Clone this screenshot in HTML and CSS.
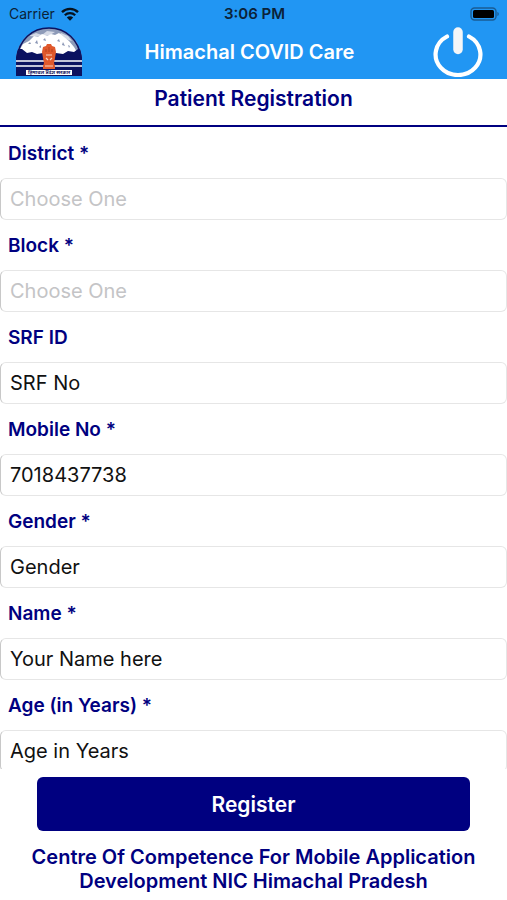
FILE: index.html
```html
<!DOCTYPE html>
<html lang="en">
<head>
    <meta charset="UTF-8">
    <meta name="viewport" content="width=device-width, initial-scale=1.0">
    <title>Himachal COVID Care</title>
    <link rel="stylesheet" href="styles.css">
</head>
<body>
    <header>
        <div class="status-bar">
            <div class="carrier">
                <span>Carrier</span>
                <svg class="wifi" viewBox="0 0 18 14" aria-hidden="true">
                    <path d="M1 5.2a11.4 11.4 0 0 1 16 0" fill="none" stroke="currentColor" stroke-width="2.4"/>
                    <path d="M3.8 8.2a7.4 7.4 0 0 1 10.4 0" fill="none" stroke="currentColor" stroke-width="2.2"/>
                    <path d="M9 13.8L5.8 10.5a4.6 4.6 0 0 1 6.4 0z" fill="currentColor"/>
                </svg>
            </div>
            <div class="time">3:06 PM</div>
            <svg class="battery" viewBox="0 0 30 14" aria-hidden="true">
                <rect x="1" y="1" width="25" height="12" rx="3.5" fill="none" stroke="#1a5c94" stroke-width="1.4"/>
                <rect x="3" y="3" width="21" height="8" rx="1.5" fill="#000"/>
                <path d="M27.4 5v4c1.8-.5 1.8-3.5 0-4z" fill="#1a5c94"/>
            </svg>
        </div>
        <div class="title-bar">
            <svg class="emblem" viewBox="0 0 66 50" role="img" aria-label="Government of Himachal Pradesh">
                <defs>
                    <clipPath id="dome">
                        <path d="M0 49V31C2 13 15 1 33 1s31 12 33 30v18z"/>
                    </clipPath>
                </defs>
                <g clip-path="url(#dome)">
                    <rect width="66" height="50" fill="#8e9bb8"/>
                    <path d="M13 9l7-3 6 2 5-4 8 1-5 3-8 2zM45 6l7 3 4 5-7-2-7-3z" fill="#d5dae6"/>
                    <path d="M2 26l5-9 6-3 5-5 4 1 4-3 5 2 4-2 4 1 4-2 5 4 5 4 5 6 3 5v5H2z" fill="#fff"/>
                    <path d="M12 17l2-2 1 2zM19 16l2-3 1 4zM27 13l2-2 1 3zM41 14l2-2 1 3zM46 18l1-3 2 4zM52 18l2 1-1 2zM23 20l2-2v3z" fill="#8a96b5"/>
                    <path d="M0 22l6 0 5 4 5-1 5 2 6-1 6 2 7-2 7 1 5-3 6 1 4-3h4v28H0z" fill="#0b1260"/>
                    <path d="M0 34h66M0 39h66" stroke="#fff" stroke-width="1.5"/>
                </g>
                <path d="M1 31C3 13 16 1 33 1s30 12 32 30" fill="none" stroke="#0b1260" stroke-width="1.6"/>
                <path d="M27 42v-3l1-3-1-5-1-6 1-5 3-1 1-2h4l1 2 3 1 1 5-1 6-1 5 1 3v3z" fill="#e0592c"/>
                <path d="M30 28h6M30 31l2 2M36 31l-2 2M29 39h8" stroke="#f9d6c4" stroke-width="1.2"/>
                <path d="M30 22v3M33 20v5M36 22v3" stroke="#b8431f" stroke-width="1"/>
                <rect x="10" y="43" width="46" height="5" fill="#fff"/>
                <text class="emblem-text" x="33" y="47" text-anchor="middle">हिमाचल प्रदेश सरकार</text>
            </svg>
            <h1>Himachal COVID Care</h1>
            <button class="power-button" type="button" aria-label="Log out">
                <svg viewBox="0 0 50 50" fill="none" stroke="#fff" stroke-linecap="round" aria-hidden="true">
                    <path d="M14 9.5A22.4 20.6 0 1 0 36 9.5" stroke-width="4.2"/>
                    <path d="M25 5v17.5" stroke="#f4f6f8" stroke-width="9.5"/>
                </svg>
            </button>
        </div>
    </header>

    <h2>Patient Registration</h2>

    <form class="patient-form" id="patient-form">
        <label for="district">District *</label>
        <input class="picker" id="district" type="text" placeholder="Choose One">
        <label for="block">Block *</label>
        <input class="picker" id="block" type="text" placeholder="Choose One">
        <label for="srf">SRF ID</label>
        <input id="srf" type="text" placeholder="SRF No">
        <label for="mobile">Mobile No *</label>
        <input id="mobile" type="tel" value="7018437738">
        <label for="gender">Gender *</label>
        <input id="gender" type="text" placeholder="Gender">
        <label for="name">Name *</label>
        <input id="name" type="text" placeholder="Your Name here">
        <label for="age">Age (in Years) *</label>
        <input id="age" type="text" placeholder="Age in Years">
    </form>

    <footer>
        <button class="register-button" type="submit" form="patient-form">Register</button>
        <p>Centre Of Competence For Mobile Application Development NIC Himachal Pradesh</p>
    </footer>
</body>
</html>
```
FILE: styles.css
```css
:root {
    --primary-color: #2196f3;
    --navy: #000080;
    --border-color: #e6e6e6;
    --placeholder-color: #c4c4c6;
}

* {
    box-sizing: border-box;
}

body {
    font-family: Inter, 'Liberation Sans', sans-serif;
    background-color: #fff;
    color: #111;
    margin: 0;
    display: flex;
    flex-direction: column;
    height: 100vh;
}

/* Header */
header {
    background-color: var(--primary-color);
    flex: none;
}

.status-bar {
    display: grid;
    grid-template-columns: 1fr auto 1fr;
    align-items: center;
    height: 27px;
    padding: 0 7px 0 9px;
    font-size: 14px;
    color: #0b2238;
}

.carrier {
    display: flex;
    align-items: center;
    gap: 6px;
}

.wifi {
    width: 18px;
    height: 14px;
    color: #06121e;
}

.time {
    font-size: 15px;
    font-weight: 600;
}

.battery {
    width: 30px;
    height: 14px;
    justify-self: end;
}

.title-bar {
    display: grid;
    grid-template-columns: 1fr auto 1fr;
    align-items: center;
    height: 52px;
    padding: 0 24px 2px 16px;
}

.emblem {
    width: 66px;
    height: 50px;
}

.emblem-text {
    font-family: 'Noto Sans', sans-serif;
    font-size: 5px;
    font-weight: 700;
    fill: #0b1260;
}

h1 {
    margin: 0;
    font-size: 20px;
    font-weight: 600;
    color: #fff;
}

.power-button {
    justify-self: end;
    width: 50px;
    height: 50px;
    padding: 0;
    border: none;
    background: none;
    cursor: pointer;
}

.power-button svg {
    display: block;
}

h2 {
    flex: none;
    margin: 0 0 1px;
    padding: 7px 0 14px;
    border-bottom: 2px solid var(--navy);
    font-size: 21px;
    line-height: 25px;
    font-weight: 600;
    text-align: center;
    color: var(--navy);
}

/* Form */
.patient-form {
    flex: 1;
    min-height: 0;
    overflow: hidden;
}

.patient-form label {
    display: block;
    padding: 2px 8px 0;
    font-size: 19px;
    line-height: 48px;
    font-weight: 600;
    color: var(--navy);
}

.patient-form input {
    display: block;
    width: 100%;
    height: 42px;
    padding: 0 9px;
    border: 1px solid var(--border-color);
    border-left-color: #c8c8c8;
    border-radius: 6px;
    background-color: #fff;
    font: inherit;
    font-size: 20px;
    color: #111;
}

.patient-form input::placeholder {
    color: #111;
    opacity: 1;
}

.patient-form .picker::placeholder {
    color: var(--placeholder-color);
}

/* Footer */
footer {
    flex: none;
    padding: 8px 24px 7px;
    text-align: center;
    color: var(--navy);
}

.register-button {
    display: block;
    width: calc(100% - 26px);
    height: 54px;
    margin: 0 auto 14px;
    border: none;
    border-radius: 6px;
    background-color: var(--navy);
    color: #fff;
    font: inherit;
    font-size: 21px;
    font-weight: 600;
    cursor: pointer;
}

footer p {
    margin: 0;
    font-size: 20px;
    line-height: 24px;
    font-weight: 600;
}
```
